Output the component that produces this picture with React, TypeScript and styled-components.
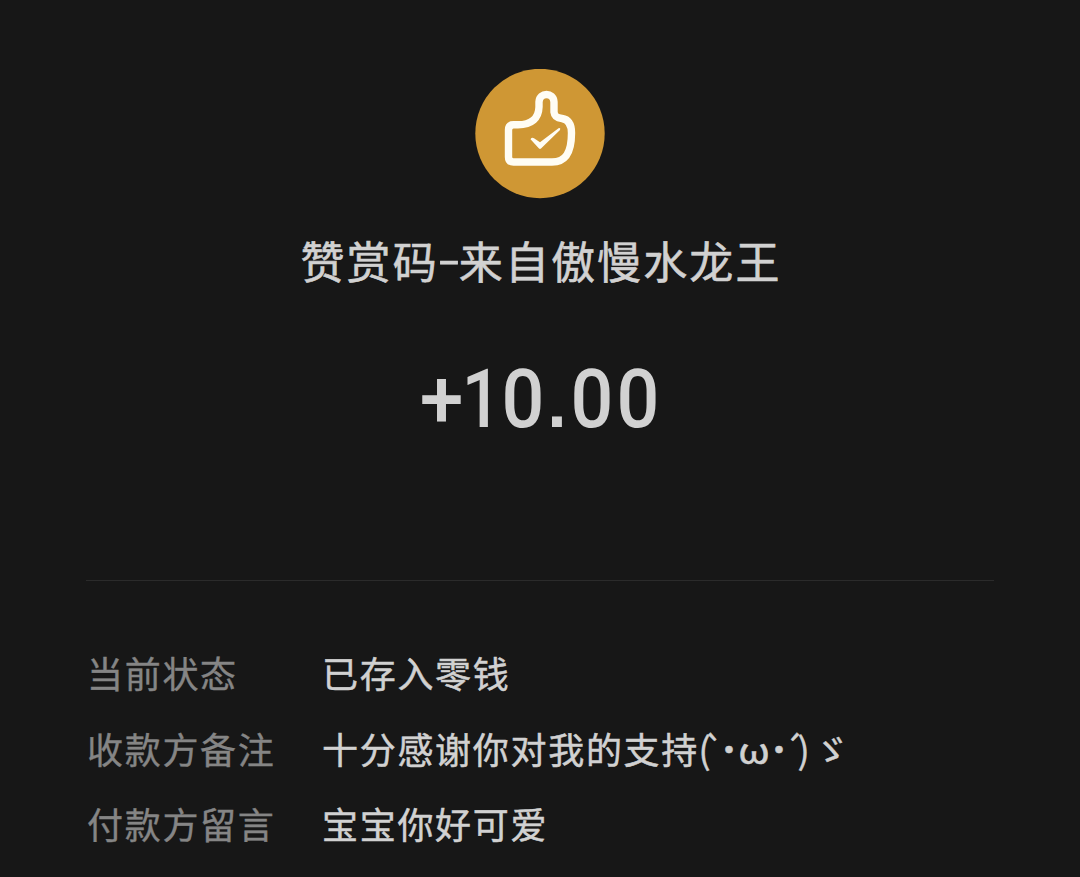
import React from 'react';
import styled, { createGlobalStyle } from 'styled-components';

const colors = {
    background: '#171717',
    text: '#d1d1d1',
    label: '#858585',
    line: '#2b2b2b',
    gold: '#cf9734',
};

interface DetailProps {
    label: string;
    children: React.ReactNode;
}

const Detail = ({ label, children }: DetailProps) => {
    return (
        <DetailRow>
            <Label>{label}</Label>
            <Value>{children}</Value>
        </DetailRow>
    );
};

const RewardIcon = () => {
    return (
        <Icon viewBox="0 0 130 130" aria-hidden="true">
            <circle cx="65" cy="64.5" r="64.7" fill={colors.gold} />
            <path
                d="M33.5 61Q33.5 55.7 38.5 55.7H43C57 55.7 63.7 49 64 38V33C64.5 23 78.5 23 79 33V43C79.5 47.5 82 49 87 49.5C93.5 50.5 96.5 56 96.5 64C96.5 83 91 93 77 93H38.5Q33.5 93 33.5 88Z"
                fill="none"
                stroke="#fffdf4"
                strokeWidth="7.4"
                strokeLinejoin="round"
            />
            <path
                d="M55.5 70.2Q56.8 68 59 69.3L65 73.2L83.5 59.2Q86 58.4 85 61L66 79.5Q65 80.3 64 79.5Z"
                fill="#fffdf4"
            />
        </Icon>
    );
};

const App = () => {
    return (
        <>
            <GlobalStyle />
            <Page>
                <Summary>
                    <RewardIcon />
                    <Title>
                        赞赏码<Dash>-</Dash>来自傲慢水龙王
                    </Title>
                    <Amount>
                        <Digit $width={43} $scale={0.96}>
                            +
                        </Digit>
                        <Digit $width={37} $scale={0.85}>
                            1
                        </Digit>
                        <Digit $width={46} $scale={0.92}>
                            0
                        </Digit>
                        <Point>.</Point>
                        <Digit $width={46} $scale={0.92}>
                            0
                        </Digit>
                        <Digit $width={46} $scale={0.92}>
                            0
                        </Digit>
                    </Amount>
                </Summary>
                <Details>
                    <Detail label="当前状态">已存入零钱</Detail>
                    <Detail label="收款方备注">
                        十分感谢你对我的支持
                        <Mark $width={11}>(</Mark>
                        <Mark $width={8}>`</Mark>
                        <Dot $width={22}>･</Dot>
                        <Mark $width={28} $scale={1.12}>
                            ω
                        </Mark>
                        <Dot $width={22}>･</Dot>
                        <Mark $width={7}>´</Mark>
                        <Mark $width={13}>)</Mark>
                        <Mark $width={42}>ゞ</Mark>
                    </Detail>
                    <Detail label="付款方留言">宝宝你好可爱</Detail>
                </Details>
            </Page>
        </>
    );
};

export default App;

const GlobalStyle = createGlobalStyle`
    * {
        box-sizing: border-box;
    }
    body {
        margin: 0;
        background: ${colors.background};
        font-family: 'Noto Sans CJK SC', sans-serif;
    }
`;

const Page = styled.main`
    width: 1080px;
    height: 877px;
    padding: 69px 86px 0;
    overflow: hidden;
    color: ${colors.text};
    background: ${colors.background};
`;
const Summary = styled.section`
    display: flex;
    height: 512px;
    flex-direction: column;
    align-items: center;
    border-bottom: 1px solid ${colors.line};
`;
const Icon = styled.svg`
    display: block;
    width: 130px;
    height: 130px;
    flex: none;
`;
const Title = styled.h1`
    margin: 29px 0 0 2px;
    font-size: 44px;
    font-weight: 400;
    line-height: 64px;
    letter-spacing: 2.1px;
    white-space: nowrap;
    -webkit-text-stroke: 0.6px ${colors.text};
`;
const Dash = styled.span`
    display: inline-block;
    width: 20px;
    letter-spacing: 0;
    text-align: center;
    transform: translateY(-4px) scaleX(1.5);
`;
const Amount = styled.div`
    display: flex;
    margin-top: 59px;
    font-family: Roboto, sans-serif;
    font-size: 82px;
    font-weight: 500;
    line-height: 96px;
    white-space: nowrap;
`;
const Digit = styled.span<{ $width: number; $scale: number }>`
    display: flex;
    width: ${({ $width }) => $width}px;
    justify-content: center;
    transform: scaleX(${({ $scale }) => $scale});
`;
const Point = styled.span`
    display: flex;
    width: 23px;
    justify-content: center;
    font-family: 'Liberation Sans', sans-serif;
    font-size: 70px;
    font-weight: 700;
    line-height: 105px;
`;
const Details = styled.dl`
    display: flex;
    margin: 54px 0 0 1px;
    flex-direction: column;
`;
const DetailRow = styled.div`
    display: grid;
    grid-template-columns: 235px 1fr;
    height: 75.5px;
    font-size: 36px;
    line-height: 75px;
    letter-spacing: 1.7px;
    white-space: nowrap;
`;
const Label = styled.dt`
    color: ${colors.label};
    -webkit-text-stroke: 0.4px ${colors.label};
`;
const Value = styled.dd`
    display: flex;
    margin: 0;
    -webkit-text-stroke: 0.5px ${colors.text};
`;
const Mark = styled.span<{ $width: number; $scale?: number }>`
    display: flex;
    width: ${({ $width }) => $width}px;
    flex: none;
    justify-content: center;
    letter-spacing: 0;
    transform: scaleX(${({ $scale }) => $scale ?? 1});
`;
const Dot = styled(Mark)`
    font-weight: 700;
`;
